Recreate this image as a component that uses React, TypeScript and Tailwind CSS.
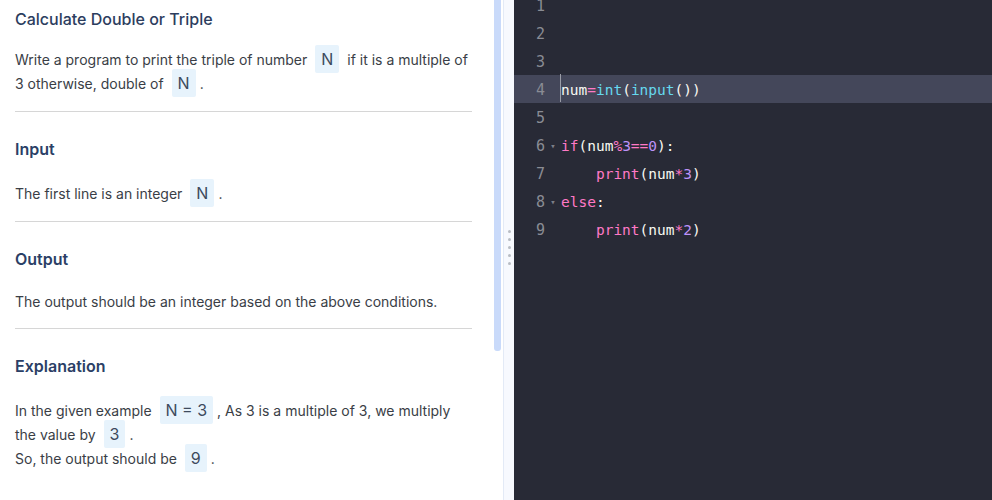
import React from 'react';

const Chip = ({ children }: { children: React.ReactNode }) => (
  <span className="mx-[4px] rounded-[2px] bg-[#e7f3fc] px-[6px] py-[4px] text-[16px] leading-none text-[#3d4a5c]">
    {children}
  </span>
);

const Heading = ({ children }: { children: React.ReactNode }) => (
  <h2 className="mt-[25px] text-[16px] font-semibold leading-6 text-[#2b3f66]">
    {children}
  </h2>
);

const Rule = () => <div className="mt-[15px] h-px bg-[#d6d6d6]" />;

type Tok = [string, string];

const W = 'text-[#f8f8f2]';
const PINK = 'text-[#ff79c6]';
const CYAN = 'text-[#66d9ef]';
const PURPLE = 'text-[#bd93f9]';

const lines: { toks: Tok[]; fold?: boolean }[] = [
  { toks: [] },
  { toks: [] },
  { toks: [] },
  {
    toks: [
      ['num', W],
      ['=', PINK],
      ['int', CYAN],
      ['(', W],
      ['input', CYAN],
      ['())', W],
    ],
  },
  { toks: [] },
  {
    fold: true,
    toks: [
      ['if', PINK],
      ['(num', W],
      ['%', PINK],
      ['3', PURPLE],
      ['==', PINK],
      ['0', PURPLE],
      ['):', W],
    ],
  },
  {
    toks: [
      ['    ', W],
      ['print', PINK],
      ['(num', W],
      ['*', PINK],
      ['3', PURPLE],
      [')', W],
    ],
  },
  { fold: true, toks: [['else', PINK], [':', W]] },
  {
    toks: [
      ['    ', W],
      ['print', PINK],
      ['(num', W],
      ['*', PINK],
      ['2', PURPLE],
      [')', W],
    ],
  },
];

export default function App() {
  return (
    <div className="flex h-[500px] w-[992px] overflow-hidden bg-white font-['Inter','Noto_Sans',sans-serif]">
      {/* problem statement */}
      <div className="flex w-[503px] shrink-0">
        <div className="w-[494px] shrink-0 pl-[15px] pr-[22px] pt-[7px] text-[14px] leading-6 text-[#3a3e46]">
          <h1 className="text-[16px] font-medium leading-6 text-[#2c3d5e]">
            Calculate Double or Triple
          </h1>
          <p className="mt-[17px]">
            Write a program to print the triple of number <Chip>N</Chip> if it is
            a multiple of 3 otherwise, double of <Chip>N</Chip>.
          </p>
          <Rule />
          <Heading>Input</Heading>
          <p className="mt-[21px]">
            The first line is an integer <Chip>N</Chip>.
          </p>
          <Rule />
          <Heading>Output</Heading>
          <p className="mt-[19px]">
            The output should be an integer based on the above conditions.
          </p>
          <div className="mt-[14px] h-px bg-[#d6d6d6]" />
          <Heading>Explanation</Heading>
          <p className="mt-[21px]">
            In the given example <Chip>N = 3</Chip>, As 3 is a multiple of 3, we
            multiply the value by <Chip>3</Chip>.
            <br />
            So, the output should be <Chip>9</Chip>.
          </p>
        </div>
        <div className="w-[7px] shrink-0">
          <div className="h-[351px] rounded-b-[3px] bg-[#c9dafa]" />
        </div>
      </div>

      {/* splitter */}
      <div className="flex w-[11px] shrink-0 flex-col items-center justify-center gap-[5px] border-l border-[#e3eaf6] bg-[#f7f9fe] pb-[6px]">
        {[0, 1, 2, 3, 4].map((i) => (
          <span key={i} className="h-[3px] w-[3px] rounded-full bg-[#b8bcc4]" />
        ))}
      </div>

      {/* editor */}
      <div className="flex-1 overflow-hidden bg-[#282a36] font-['DejaVu_Sans_Mono','Liberation_Mono',monospace] text-[14.5px]">
        <div className="-mt-[9px]">
          {lines.map((ln, i) => {
            const active = i === 3;
            return (
              <div
                key={i}
                className={`flex h-[28px] items-center pt-[3px] ${active ? 'bg-[#44475a]' : ''}`}
              >
                <div className="flex w-[47px] shrink-0 items-center justify-end">
                  <span className="w-[14px] text-right text-[15px] text-[#8a8c94]">{i + 1}</span>
                  <span className="flex w-[16px] justify-center text-[9px] text-[#7c7f88]">
                    {ln.fold ? '▾' : ''}
                  </span>
                </div>
                <div className="relative whitespace-pre">
                  {active && (
                    <span className="absolute -left-[1px] top-[-6px] h-[28px] w-px bg-[#9a9ca6]" />
                  )}
                  {ln.toks.map(([t, c], j) => (
                    <span key={j} className={c}>
                      {t}
                    </span>
                  ))}
                </div>
              </div>
            );
          })}
        </div>
      </div>
    </div>
  );
}
